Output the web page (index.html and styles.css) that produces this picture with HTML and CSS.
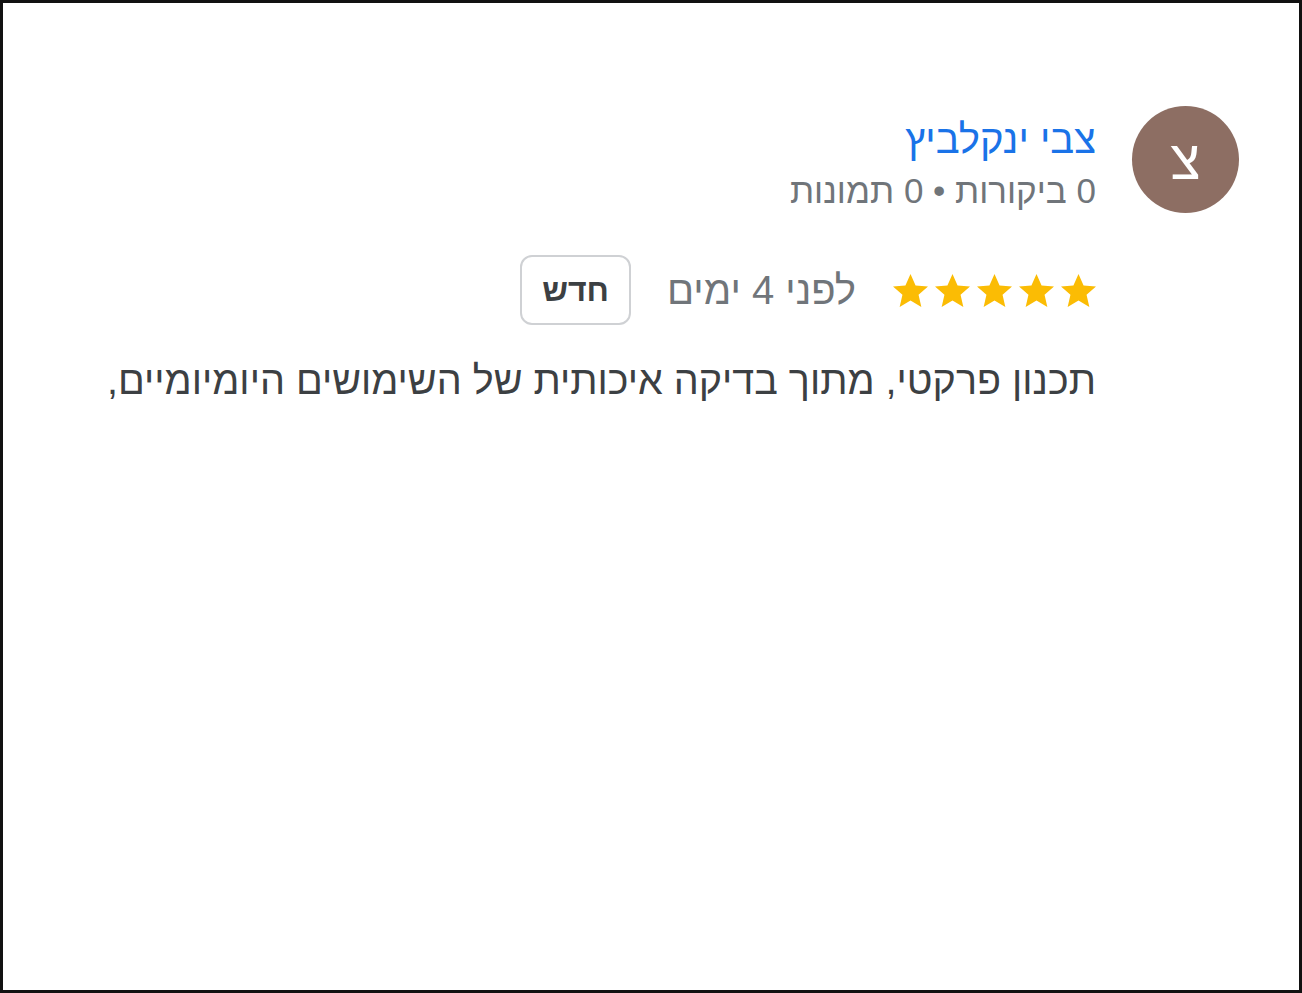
FILE: index.html
```html
<!DOCTYPE html>
<html lang="he" dir="rtl">
<head>
<meta charset="utf-8">
<link rel="stylesheet" href="styles.css">
</head>
<body>
<div class="frame">
  <div class="review">
    <div class="avatar">צ</div>
    <div class="content">
      <a class="name" href="#">צבי ינקלביץ</a>
      <div class="meta">0 ביקורות • 0 תמונות</div>
      <div class="rating-row">
        <div class="stars">
          <svg viewBox="2 2 20 20"><path d="M12 2.5l2.9 6.6 7.1.6-5.4 4.7 1.6 7-6.2-3.7-6.2 3.7 1.6-7L2 9.7l7.1-.6z"/></svg>
          <svg viewBox="2 2 20 20"><path d="M12 2.5l2.9 6.6 7.1.6-5.4 4.7 1.6 7-6.2-3.7-6.2 3.7 1.6-7L2 9.7l7.1-.6z"/></svg>
          <svg viewBox="2 2 20 20"><path d="M12 2.5l2.9 6.6 7.1.6-5.4 4.7 1.6 7-6.2-3.7-6.2 3.7 1.6-7L2 9.7l7.1-.6z"/></svg>
          <svg viewBox="2 2 20 20"><path d="M12 2.5l2.9 6.6 7.1.6-5.4 4.7 1.6 7-6.2-3.7-6.2 3.7 1.6-7L2 9.7l7.1-.6z"/></svg>
          <svg viewBox="2 2 20 20"><path d="M12 2.5l2.9 6.6 7.1.6-5.4 4.7 1.6 7-6.2-3.7-6.2 3.7 1.6-7L2 9.7l7.1-.6z"/></svg>
        </div>
        <span class="date">לפני 4 ימים</span>
        <span class="badge">חדש</span>
      </div>
      <p class="text">תכנון פרקטי, מתוך בדיקה איכותית של השימושים היומיומיים,</p>
    </div>
  </div>
</div>
</body>
</html>
```
FILE: styles.css
```css
html, body {
  margin: 0;
  padding: 0;
  background: #fff;
}
.frame {
  box-sizing: border-box;
  width: 1302px;
  height: 993px;
  border: 3px solid #111;
  padding: 103px 60px 0 60px;
  font-family: "Liberation Sans", Arial, sans-serif;
}
.review {
  display: flex;
  align-items: flex-start;
  gap: 36px;
}
.avatar {
  flex: none;
  width: 107px;
  height: 107px;
  border-radius: 50%;
  background: #8d6e63;
  color: #fff;
  font-size: 55px;
  display: flex;
  align-items: center;
  justify-content: center;
}
.content {
  display: flex;
  flex-direction: column;
  align-items: flex-start;
}
.name {
  color: #1a73e8;
  text-decoration: none;
  font-size: 40px;
  line-height: 50px;
  margin-top: 8px;
}
.meta {
  color: #70757a;
  font-size: 35px;
  line-height: 50px;
  margin-top: 2px;
}
.rating-row {
  display: flex;
  align-items: center;
  gap: 37px;
  margin-top: 39px;
}
.stars {
  display: flex;
  gap: 7px;
}
.stars svg {
  width: 35px;
  height: 35px;
  fill: #fbbc04;
}
.date {
  color: #70757a;
  font-size: 40px;
}
.badge {
  box-sizing: border-box;
  height: 70px;
  margin-right: -1px;
  padding: 0 20px;
  border: 2px solid #cfd1d4;
  border-radius: 12px;
  display: flex;
  align-items: center;
  font-size: 32px;
  font-weight: bold;
  color: #3c4043;
}
.text {
  margin: 30px 0 0 0;
  color: #3c4043;
  font-size: 39.5px;
  line-height: 50px;
}
```
